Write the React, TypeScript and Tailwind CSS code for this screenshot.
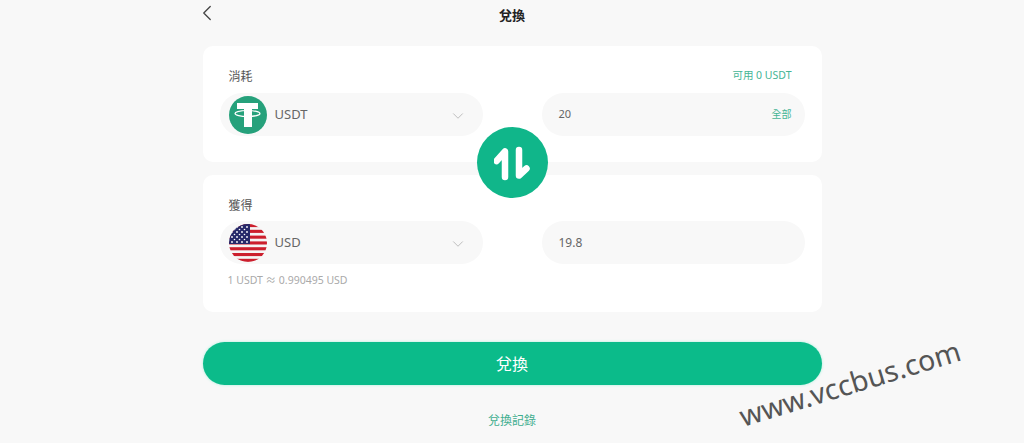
import { ChevronDown, ChevronLeft } from "lucide-react";

function TetherIcon() {
  return (
    <svg viewBox="0 0 38 38" className="h-[38px] w-[38px] shrink-0">
      <circle cx="19" cy="19" r="19" fill="#26a17b" />
      <path d="M8 7h21v6h-6v18h-8V13H8z" fill="#fff" />
      <ellipse cx="18.5" cy="17.5" rx="12.5" ry="3" fill="none" stroke="#fff" strokeWidth="1.2" />
    </svg>
  );
}

function UsFlagIcon() {
  const stripes = [0, 1, 2, 3, 4, 5, 6];
  const stars = [3, 8, 13, 18];
  return (
    <svg viewBox="0 0 38 38" className="h-[38px] w-[38px] shrink-0">
      <defs>
        <clipPath id="flag-clip">
          <circle cx="19" cy="19" r="19" />
        </clipPath>
      </defs>
      <g clipPath="url(#flag-clip)">
        <rect width="38" height="38" fill="#f5f5f5" />
        {stripes.map((i) => (
          <rect key={i} x="0" y={i * 5.8} width="38" height="3.1" fill="#cc1f2d" />
        ))}
        <rect width="21" height="20" fill="#27296a" />
        {stars.map((y) =>
          stars.map((x) => (
            <circle key={`${x}-${y}`} cx={x} cy={y} r="0.9" fill="#fff" />
          )),
        )}
        {[5.5, 10.5, 15.5].map((y) =>
          [5.5, 10.5, 15.5].map((x) => (
            <circle key={`b${x}-${y}`} cx={x} cy={y} r="0.8" fill="#fff" />
          )),
        )}
      </g>
    </svg>
  );
}

function SwapIcon() {
  return (
    <svg viewBox="0 0 36 36" className="h-9 w-9" fill="none" stroke="#fff" strokeWidth="6.5" strokeLinecap="round" strokeLinejoin="round">
      <path d="M2.5 16 L11 6.5 V32" />
      <path d="M25 5 V30.5 L32.5 23.5" />
    </svg>
  );
}

function CurrencySelect({ icon, name }: { icon: React.ReactNode; name: string }) {
  return (
    <div className="flex h-[43px] w-[263px] items-center rounded-full bg-[#f8f8f8] pl-[9px] pr-[16px]">
      {icon}
      <span className="ml-2 flex-1 text-[13px] text-[#666]">{name}</span>
      <ChevronDown className="mt-[3px] h-[18px] w-[18px] text-[#aaa]" strokeWidth={1} />
    </div>
  );
}

export default function App() {
  return (
    <div
      className="relative h-[443px] w-[1024px] overflow-hidden bg-[#f8f8f8]"
      style={{ fontFamily: '"Noto Sans", "Noto Sans CJK TC", sans-serif' }}
    >
      <div className="mx-auto w-[619px]">
        <div className="relative flex h-[46px] items-start justify-center pt-[6px]">
          <ChevronLeft className="absolute left-[-9px] top-0 h-[26px] w-[26px] text-[#444]" strokeWidth={1.2} />
          <span className="text-[13px] font-bold leading-[19px] text-[#222]">兌換</span>
        </div>

        <div className="relative flex flex-col gap-[13px]">
          <div className="h-[116px] rounded-[10px] bg-white px-[17px] pt-[21px]">
            <div className="flex h-[18px] items-center justify-between pl-[8px] pr-[13px]">
              <span className="pl-px pt-[2px] text-[12px] text-[#555]">消耗</span>
              <span className="text-[10.5px] text-[#45b595]">可用 0 USDT</span>
            </div>
            <div className="mt-[8px] flex justify-between">
              <CurrencySelect icon={<TetherIcon />} name="USDT" />
              <div className="flex h-[43px] w-[263px] items-center justify-between rounded-full bg-[#f8f8f8] pl-[17px] pr-[13px]">
                <span className="text-[11px] text-[#666]">20</span>
                <span className="text-[10px] text-[#45b595]">全部</span>
              </div>
            </div>
          </div>

          <div className="h-[137px] rounded-[10px] bg-white px-[17px] pt-[21px]">
            <div className="flex h-[18px] items-center pl-[8px]">
              <span className="pl-px pt-[2px] text-[12px] text-[#555]">獲得</span>
            </div>
            <div className="mt-[7px] flex justify-between">
              <CurrencySelect icon={<UsFlagIcon />} name="USD" />
              <div className="flex h-[43px] w-[263px] items-center rounded-full bg-[#f8f8f8] pl-[17px]">
                <span className="text-[12px] text-[#666]">19.8</span>
              </div>
            </div>
            <p className="mt-[9px] pl-[8px] text-[10.5px] leading-[14px] text-[#aaa]">1 USDT ≈ 0.990495 USD</p>
          </div>

          <div className="absolute left-[274px] top-[81px] flex h-[71px] w-[71px] items-center justify-center rounded-full bg-[#10b68a]">
            <SwapIcon />
          </div>
        </div>

        <button className="mt-[30px] block h-[43px] w-full rounded-full bg-[#0bbb8a] text-[16px] text-white shadow-[0_0_3px_#a8f0dc]">
          兌換
        </button>
        <div className="mt-[27px] text-center text-[12px] text-[#3fae8f]">兌換記錄</div>
      </div>

      <div className="absolute left-[735px] top-[365px] origin-center -rotate-[17deg] whitespace-nowrap text-[28.5px] leading-[36px] text-[#555]">
        www.vccbus.com
      </div>
    </div>
  );
}
